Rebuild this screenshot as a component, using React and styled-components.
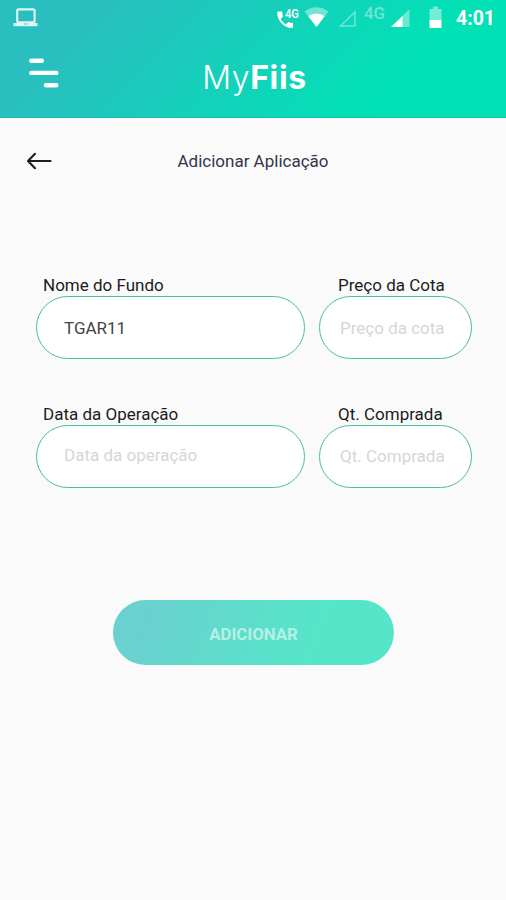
import { useState } from "react";
import styled, { createGlobalStyle } from "styled-components";

const GlobalStyle = createGlobalStyle`
  * {
    box-sizing: border-box;
  }
  body {
    margin: 0;
    background: #fafafa;
  }
`;

// ----- Layout -----
const Screen = styled.div`
  width: 100%;
  height: 100vh;
  min-height: 900px;
  background: #fafafa;
  font-family: Roboto, "Liberation Sans", sans-serif;
  color: #1c1c1c;
`;

const Header = styled.header`
  height: 118px;
  background: linear-gradient(135deg, #29bfbf 18%, #02e0b6 74%);
  border-bottom: 1px solid rgba(0, 150, 130, 0.22);
`;

const StatusBar = styled.div`
  height: 36px;
  padding: 0 11px 0 13px;
  display: flex;
  align-items: center;
  justify-content: space-between;
`;

const StatusIcons = styled.div`
  display: flex;
  align-items: center;
  color: #fff;

  svg {
    display: block;
  }
`;

const Clock = styled.span`
  width: 39px;
  padding-top: 1px;
  font-size: 19.5px;
  font-weight: 700;
  line-height: 35px;
  white-space: nowrap;
`;

const NavBar = styled.div`
  height: 81px;
  padding: 0 29px;
  display: grid;
  grid-template-columns: 60px 1fr 60px;
`;

const MenuButton = styled.button`
  width: 30px;
  height: 30px;
  margin-top: 22px;
  padding: 0;
  border: none;
  background: none;
  cursor: pointer;

  svg {
    display: block;
  }
`;

const Logo = styled.h1`
  margin: 22px 0 0 3px;
  text-align: center;
  font-family: Inter, sans-serif;
  font-size: 32px;
  font-weight: 300;
  letter-spacing: 0.6px;
  line-height: 40px;
  color: #fff;

  b {
    font-weight: 700;
  }
`;

const TitleBar = styled.div`
  height: 86px;
  padding: 0 26px;
  display: grid;
  grid-template-columns: 60px 1fr 60px;
  align-items: center;
`;

const BackButton = styled(MenuButton)`
  width: 26px;
  height: 20px;
  margin: 0;
`;

const Title = styled.h2`
  margin: 0;
  text-align: center;
  font-size: 17px;
  font-weight: 400;
  line-height: 20px;
  color: #34364a;
`;

// ----- Form -----
const Form = styled.form`
  padding: 71px 34px 0 36px;
`;

const Row = styled.div`
  display: grid;
  grid-template-columns: 269px 153px;
  column-gap: 14px;
  margin-bottom: 45px;
`;

const Field = styled.label`
  display: flex;
  flex-direction: column;
`;

const FieldName = styled.span`
  height: 21px;
  padding-left: ${({ $indent }) => $indent}px;
  font-size: 17px;
  line-height: 21px;
  white-space: nowrap;
`;

const Input = styled.input`
  width: 100%;
  height: 63px;
  padding: 0 0 ${({ $lift = 0 }) => $lift}px ${({ $indent }) => $indent}px;
  border: 1.5px solid #4dbb9f;
  border-radius: 32px;
  background: #fff;
  font-family: inherit;
  font-size: 17px;
  color: #444;
  outline: none;

  &::placeholder {
    color: #d6d6d6;
    opacity: 1;
  }
`;

const SubmitButton = styled.button`
  display: block;
  width: 281px;
  height: 65px;
  margin: 112px auto 0 77px;
  padding: 2px 0 0;
  border: none;
  border-radius: 33px;
  background: linear-gradient(110deg, #69d1cf 12%, #55e6c9 72%);
  font-family: inherit;
  font-size: 16.8px;
  font-weight: 700;
  color: #b5f0e5;
  cursor: pointer;
`;

// ----- Icons -----
const LaptopIcon = () => (
  <svg width="25" height="20" viewBox="0 0 25 20" fill="none" opacity="0.85">
    <rect x="4.2" y="1.3" width="17.4" height="13" rx="1.5" stroke="#fff" strokeWidth="2.2" />
    <path d="M0.5 15h24v3.200H0.5z" fill="#fff" />
    <path d="M11 16h4" stroke="#5fcfcb" />
  </svg>
);

const StatusGlyphs = () => (
  <svg width="180" height="36" viewBox="276 0 180 36" fill="#fff">
    <path d="M278.2 11.5h3.1c.6 0 1 .4 1 1 0 1.2.2 2.4.6 3.5.1.4 0 .8-.3 1.1l-1.9 1.9c1.3 2.5 2.8 4 5.3 5.3l1.9-1.9c.3-.3.7-.4 1.1-.2 1 .4 2 .5 3.1.6.6 0 1 .4 1 1v3.2c0 .6-.4 1-1 1-8.2 0-14.9-7.2-14.9-15.5 0-.6.4-1 1-1z" />
    <text x="285" y="17.5" fontFamily="Roboto, sans-serif" fontSize="13" fontWeight="500" textLength="14" lengthAdjust="spacingAndGlyphs">4G</text>
    <path d="M304.5 11.5C312 5.8 321 5.8 328.500 11.500L316.500 27z" opacity="0.4" />
    <path d="M308.400 16.200c5-3.700 11.200-3.700 16.200 0L316.500 27z" />
    <path d="M340.500 26H355V12z" fill="none" stroke="#fff" strokeWidth="1.5" opacity="0.4" />
    <text x="364" y="18.5" fontFamily="Roboto, sans-serif" fontSize="16" fontWeight="500" opacity="0.4" textLength="21" lengthAdjust="spacingAndGlyphs">4G</text>
    <path d="M391 27h18.500V9z" opacity="0.4" />
    <path d="M391 27h11.500V16z" />
    <path d="M429.500 9h3.500V6.500h5V9h3.500v11h-12z" opacity="0.45" />
    <path d="M429.500 20h12v8h-12z" />
  </svg>
);

const MenuIcon = () => (
  <svg width="30" height="30" viewBox="0 0 30 30" stroke="#fff" strokeWidth="4.4" strokeLinecap="round">
    <path d="M2.300 2.700h10.500M2.300 14.900h25M17 27.200h10.300" />
  </svg>
);

const BackIcon = () => (
  <svg width="26" height="20" viewBox="0 0 26 20" fill="none" stroke="#1d1d1f" strokeWidth="2.1" strokeLinecap="round" strokeLinejoin="round">
    <path d="M2 10h22.500M9 2.800L2 10l7 7.200" />
  </svg>
);

function App() {
  const [fund, setFund] = useState("TGAR11");

  return (
    <Screen>
      <GlobalStyle />
      <Header>
        <StatusBar>
          <StatusIcons>
            <LaptopIcon />
          </StatusIcons>
          <StatusIcons>
            <StatusGlyphs />
            <Clock>4:01</Clock>
          </StatusIcons>
        </StatusBar>
        <NavBar>
          <MenuButton type="button" aria-label="Menu">
            <MenuIcon />
          </MenuButton>
          <Logo>
            My<b>Fiis</b>
          </Logo>
        </NavBar>
      </Header>

      <TitleBar>
        <BackButton type="button" aria-label="Voltar">
          <BackIcon />
        </BackButton>
        <Title>Adicionar Aplicação</Title>
      </TitleBar>

      <Form onSubmit={(e) => e.preventDefault()}>
        <Row>
          <Field>
            <FieldName $indent={7}>Nome do Fundo</FieldName>
            <Input $indent={27} value={fund} onChange={(e) => setFund(e.target.value)} />
          </Field>
          <Field>
            <FieldName $indent={19}>Preço da Cota</FieldName>
            <Input $indent={20} placeholder="Preço da cota" />
          </Field>
        </Row>
        <Row>
          <Field>
            <FieldName $indent={7}>Data da Operação</FieldName>
            <Input $indent={27} $lift={3} placeholder="Data da operação" />
          </Field>
          <Field>
            <FieldName $indent={19}>Qt. Comprada</FieldName>
            <Input $indent={20} $lift={1} placeholder="Qt. Comprada" />
          </Field>
        </Row>
        <SubmitButton type="submit">ADICIONAR</SubmitButton>
      </Form>
    </Screen>
  );
}

export default App;
